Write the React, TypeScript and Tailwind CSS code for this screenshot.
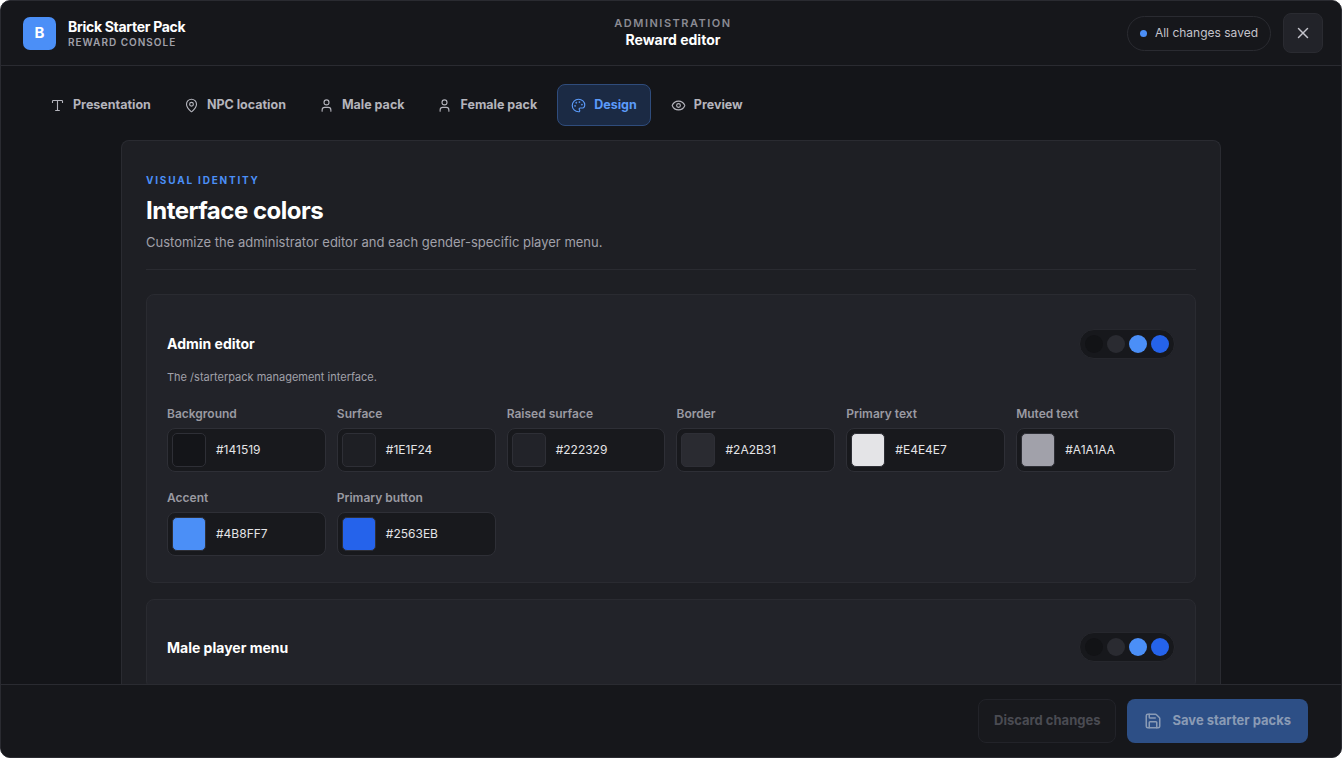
import { Type, MapPin, User, Palette, Eye, X, Save } from 'lucide-react';

const adminColors = [
  { label: 'Background', hex: '#141519' },
  { label: 'Surface', hex: '#1E1F24' },
  { label: 'Raised surface', hex: '#222329' },
  { label: 'Border', hex: '#2A2B31' },
  { label: 'Primary text', hex: '#E4E4E7' },
  { label: 'Muted text', hex: '#A1A1AA' },
  { label: 'Accent', hex: '#4B8FF7' },
  { label: 'Primary button', hex: '#2563EB' },
];

const tabs = [
  { label: 'Presentation', icon: Type },
  { label: 'NPC location', icon: MapPin },
  { label: 'Male pack', icon: User },
  { label: 'Female pack', icon: User },
  { label: 'Design', icon: Palette, active: true },
  { label: 'Preview', icon: Eye },
];

function Dots() {
  return (
    <div className="flex items-center gap-[4px] rounded-full bg-[#17181c] border border-[#26272d] px-[5px] py-[5px]">
      <span className="w-[18px] h-[18px] rounded-full bg-[#121316]" />
      <span className="w-[18px] h-[18px] rounded-full bg-[#2a2b31]" />
      <span className="w-[18px] h-[18px] rounded-full bg-[#4b8ff7]" />
      <span className="w-[18px] h-[18px] rounded-full bg-[#2563eb]" />
    </div>
  );
}

export default function App() {
  return (
    <div
      className="w-[1342px] h-[758px] bg-[#141519] text-[#e4e4e7] flex flex-col overflow-hidden rounded-[10px] border border-[#2a2b31]"
      style={{ fontFamily: 'Inter, "Noto Sans", sans-serif' }}
    >
      {/* Header */}
      <header className="h-[65px] shrink-0 flex items-center justify-between px-[22px] border-b border-[#2a2b31] bg-[#16171b]">
        <div className="flex items-center gap-[12px] w-[400px]">
          <div className="w-[33px] h-[33px] rounded-[7px] bg-[#4b8ff7] flex items-center justify-center text-white font-bold text-[15px]">B</div>
          <div className="flex flex-col leading-tight">
            <span className="text-[14px] font-bold text-white tracking-[-0.3px]">Brick Starter Pack</span>
            <span className="text-[10px] font-semibold tracking-[1px] text-[#a1a1aa]">REWARD CONSOLE</span>
          </div>
        </div>
        <div className="flex flex-col items-center leading-tight">
          <span className="text-[11px] font-semibold tracking-[1.5px] text-[#8b8b93]">ADMINISTRATION</span>
          <span className="text-[14px] font-bold text-white">Reward editor</span>
        </div>
        <div className="flex items-center justify-end gap-[12px] w-[400px] -mr-[4px]">
          <div className="flex items-center gap-[8px] h-[35px] px-[12px] rounded-full border border-[#2a2b31] text-[12px] text-[#c4c4cc]">
            <span className="w-[7px] h-[7px] rounded-full bg-[#4b8ff7]" />
            All changes saved
          </div>
          <button className="w-[40px] h-[40px] rounded-[8px] bg-[#222329] border border-[#2a2b31] flex items-center justify-center text-[#c4c4cc]">
            <X size={18} />
          </button>
        </div>
      </header>

      {/* Body */}
      <main className="flex-1 min-h-0 overflow-hidden flex flex-col">
        <nav className="flex items-center gap-[7px] px-[36px] pt-[18px] pb-[14px]">
          {tabs.map(({ label, icon: Icon, active }) => (
            <div
              key={label}
              className={
                active
                  ? 'flex items-center gap-[8px] h-[42px] px-[13px] rounded-[8px] bg-[#1b2a44] border border-[#2f4c7c] text-[#5b9bfa] text-[12.5px] font-bold'
                  : 'flex items-center gap-[8px] h-[42px] px-[12px] rounded-[8px] border border-transparent text-[#b4b4bc] text-[12.5px] font-bold'
              }
            >
              <Icon size={15} strokeWidth={1.8} />
              {label}
            </div>
          ))}
        </nav>

        <div className="mx-auto w-[1100px] flex-1 rounded-t-[8px] bg-[#1e1f24] border border-[#2a2b31] border-b-0 px-[24px] pt-[32px]">
          <p className="text-[10px] font-bold tracking-[1.8px] text-[#4b8ff7]">VISUAL IDENTITY</p>
          <h1 className="mt-[5px] text-[24px] font-bold text-white tracking-[-0.5px]">Interface colors</h1>
          <p className="mt-[4px] text-[13px] text-[#a1a1aa]">Customize the administrator editor and each gender-specific player menu.</p>
          <div className="mt-[16px] h-px bg-[#2a2b31]" />

          <section className="mt-[24px] rounded-[8px] bg-[#222329] border border-[#2a2b31] px-[20px] pt-[34px] pb-[26px]">
            <div className="flex items-center justify-between">
              <h2 className="text-[14px] font-bold text-white">Admin editor</h2>
              <Dots />
            </div>
            <p className="mt-[10px] text-[11px] text-[#a1a1aa]">The /starterpack management interface.</p>
            <div className="mt-[20px] grid grid-cols-6 gap-x-[11px] gap-y-[17px]">
              {adminColors.map((c) => (
                <div key={c.label} className="flex flex-col gap-[5px]">
                  <span className="text-[12px] font-semibold text-[#9a9aa2]">{c.label}</span>
                  <div className="h-[44px] flex items-center gap-[10px] rounded-[8px] bg-[#18191d] border border-[#2e2f36] px-[4px]">
                    <span className="w-[34px] h-[34px] rounded-[5px] border border-[#2e2f36]" style={{ backgroundColor: c.hex }} />
                    <span className="text-[12px] text-[#e4e4e7]">{c.hex}</span>
                  </div>
                </div>
              ))}
            </div>
          </section>

          <section className="mt-[16px] rounded-[8px] bg-[#222329] border border-[#2a2b31] px-[20px] pt-[32px] pb-[26px]">
            <div className="flex items-center justify-between">
              <h2 className="text-[14px] font-bold text-white">Male player menu</h2>
              <Dots />
            </div>
          </section>
        </div>
      </main>

      {/* Footer */}
      <footer className="h-[73px] shrink-0 border-t border-[#2a2b31] bg-[#16171b] flex items-center justify-end gap-[11px] px-[33px]">
        <button className="h-[44px] px-[15px] rounded-[8px] bg-[#18191d] border border-[#222329] text-[13px] font-bold text-[#4a4b52]">Discard changes</button>
        <button className="h-[44px] px-[17px] rounded-[8px] bg-[#2d4f86] text-[13px] font-bold text-[#8a9bb5] flex items-center gap-[10px]">
          <Save size={18} />
          Save starter packs
        </button>
      </footer>
    </div>
  );
}
